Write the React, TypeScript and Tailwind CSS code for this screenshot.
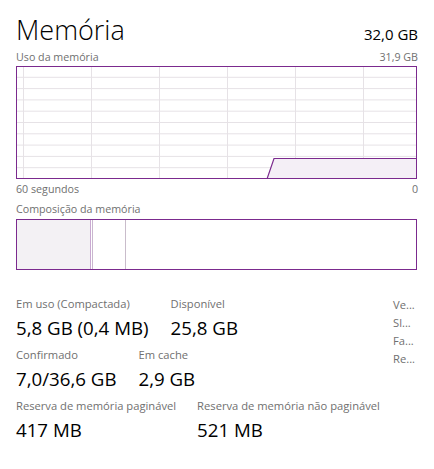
import React from "react";

const W = 401;
const H = 113;

function UsageChart() {
  const vLines = [7, 75, 143, 211, 279, 347];
  const hLines = Array.from({ length: 9 }, (_, i) => ((i + 1) * H) / 10);
  return (
    <svg width={W} height={H} className="block">
      {hLines.map((y) => (
        <line key={y} x1={0} x2={W} y1={y} y2={y} stroke="#e6e2e6" strokeWidth={1} />
      ))}
      {vLines.map((x) => (
        <line key={x} x1={x + 0.5} x2={x + 0.5} y1={0} y2={H} stroke="#e6e2e6" strokeWidth={1} />
      ))}
      <polygon points={`251,${H} 258,92.5 ${W},92.5 ${W},${H}`} fill="#f4eff6" />
      <polyline points={`251,${H} 258,92.5 ${W},92.5`} fill="none" stroke="#7b2a8e" strokeWidth={1.2} />
      <rect x={0.5} y={0.5} width={W - 1} height={H - 1} fill="none" stroke="#7b2a8e" strokeWidth={1} />
    </svg>
  );
}

function Stat({ label, value }: { label: string; value: string }) {
  return (
    <div className="flex flex-col">
      <span className="text-[11.2px] leading-[16px] text-[#707070]">{label}</span>
      <span className="text-[18.7px] leading-[31px] text-black">{value}</span>
    </div>
  );
}

export default function App() {
  return (
    <div className="w-[434px] h-[469px] bg-white px-4 font-['Open_Sans',sans-serif] text-black">
      <div className="flex items-end justify-between pt-[12px]">
        <h1 className="text-[27px] leading-[36px] font-light">Memória</h1>
        <span className="text-[15px] leading-[22px] mb-[3px]">32,0 GB</span>
      </div>
      <div className="flex justify-between text-[10.7px] leading-[16px] text-[#707070] mt-[1px]">
        <span>Uso da memória</span>
        <span>31,9 GB</span>
      </div>
      <div className="mt-[1px]">
        <UsageChart />
      </div>
      <div className="flex justify-between text-[10.7px] leading-[16px] text-[#707070] mt-[2px]">
        <span>60 segundos</span>
        <span>0</span>
      </div>
      <div className="text-[10.7px] leading-[16px] text-[#707070] mt-[4px]">Composição da memória</div>
      <div className="mt-[2px] flex h-[51px] w-[401px] border border-[#7b2a8e]">
        <div className="w-[74px] bg-[#f3f1f4] border-r border-[#c9a9d2]" />
        <div className="w-[2px] border-r border-[#c9b6ce]" />
        <div className="w-[33px] border-r border-[#c9bccb]" />
        <div className="flex-1" />
      </div>
      <div className="flex mt-[26px]">
        <div className="flex flex-col gap-[4px] w-[377px]">
          <div className="flex gap-[22px]">
            <Stat label="Em uso (Compactada)" value="5,8 GB (0,4 MB)" />
            <Stat label="Disponível" value="25,8 GB" />
          </div>
          <div className="flex gap-[22px]">
            <Stat label="Confirmado" value="7,0/36,6 GB" />
            <Stat label="Em cache" value="2,9 GB" />
          </div>
          <div className="flex gap-[21px]">
            <Stat label="Reserva de memória paginável" value="417 MB" />
            <Stat label="Reserva de memória não paginável" value="521 MB" />
          </div>
        </div>
        <div className="flex flex-col text-[11.2px] leading-[18px] text-[#707070]">
          <span>Ve...</span>
          <span>Sl...</span>
          <span>Fa...</span>
          <span>Re...</span>
        </div>
      </div>
    </div>
  );
}
